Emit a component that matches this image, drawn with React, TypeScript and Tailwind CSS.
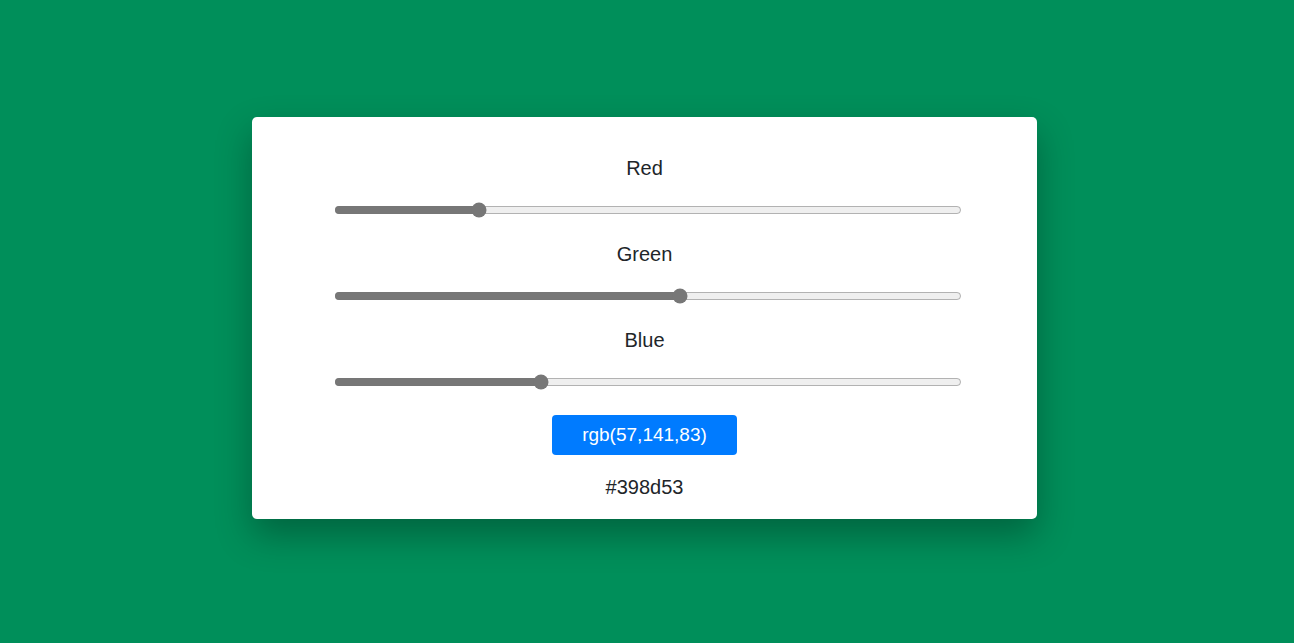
import { useState } from "react";

function toHex(n: number) {
  return n.toString(16).padStart(2, "0");
}

function ColorSlider({
  label,
  value,
  onChange,
}: {
  label: string;
  value: number;
  onChange: (v: number) => void;
}) {
  return (
    <div className="flex flex-col items-center">
      <label className="text-[20px] leading-[30px] text-[#212529]">{label}</label>
      <input
        type="range"
        min={0}
        max={255}
        value={value}
        onChange={(e) => onChange(Number(e.target.value))}
        className="mt-[19px] w-[628px] h-[16px] ml-[7px] accent-[#777777] cursor-pointer"
      />
    </div>
  );
}

export default function App() {
  const [red, setRed] = useState(57);
  const [green, setGreen] = useState(141);
  const [blue, setBlue] = useState(83);

  const hex = `#${toHex(red)}${toHex(green)}${toHex(blue)}`;

  return (
    <main
      className="min-h-screen w-full bg-[#008f5a] pt-[117px]"
      style={{ fontFamily: '"Liberation Sans", Arial, sans-serif' }}
    >
      <div className="ml-[252px] w-[785px] h-[402px] bg-white rounded-[5px] shadow-[0_16px_36px_rgba(0,0,0,0.3)] pt-[36px] flex flex-col items-center">
        <ColorSlider label="Red" value={red} onChange={setRed} />
        <div className="mt-[21px]">
          <ColorSlider label="Green" value={green} onChange={setGreen} />
        </div>
        <div className="mt-[21px]">
          <ColorSlider label="Blue" value={blue} onChange={setBlue} />
        </div>

        <button
          type="button"
          className="mt-[25px] w-[185px] h-[40px] rounded-[4px] bg-[#007bff] text-white text-[19px]"
        >
          rgb({red},{green},{blue})
        </button>

        <p className="mt-[17px] text-[20px] leading-[30px] text-[#212529]">{hex}</p>
      </div>
    </main>
  );
}
